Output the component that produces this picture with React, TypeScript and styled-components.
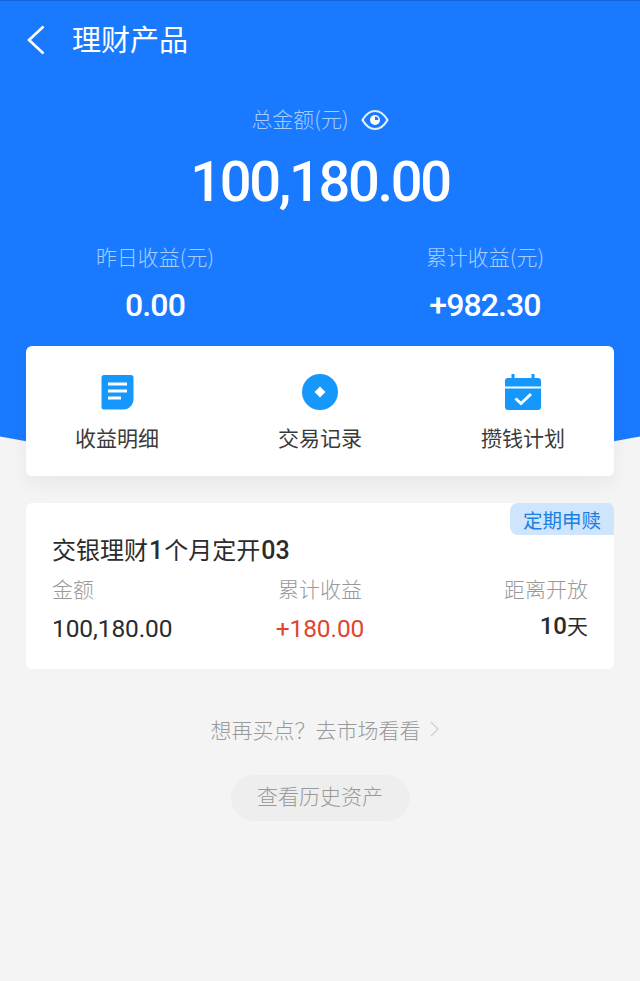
import styled, { createGlobalStyle } from "styled-components";

const cjk = '"Noto Sans CJK SC", "Noto Sans", sans-serif';
const num = 'Roboto, "Noto Sans CJK SC", sans-serif';

const GlobalStyle = createGlobalStyle`
  html, body {
    margin: 0;
    padding: 0;
    background: #f4f4f4;
  }
  * {
    box-sizing: border-box;
  }
`;

const Page = styled.div`
  width: 640px;
  height: 981px;
  overflow: hidden;
  background: #f4f4f4;
  font-family: ${cjk};
`;

const Hero = styled.section`
  height: 470px;
  padding-top: 2px;
  background: #1a7aff;
  border-top: 1px solid #1265d6;
  clip-path: circle(1700px at 50% -1233px);
  color: #fff;
`;

const Header = styled.header`
  height: 74px;
  display: flex;
  align-items: center;
  gap: 27px;
  padding-left: 26px;
`;

const Title = styled.h1`
  margin: -4px 0 0;
  font-size: 29px;
  font-weight: 400;
  line-height: 40px;
`;

const TotalLabel = styled.div`
  margin-top: 24px;
  height: 34px;
  display: flex;
  justify-content: center;
  align-items: center;
  gap: 11px;

  svg {
    margin: 3px 0 0 1px;
  }
`;

const MutedText = styled.span`
  font-size: 21px;
  font-weight: 300;
  line-height: 30px;
  color: #a6cdff;
`;

const TotalValue = styled.div`
  margin-top: 14px;
  text-align: center;
  font-family: ${num};
  font-size: 56px;
  font-weight: 500;
  line-height: 66px;
  letter-spacing: -2.3px;
`;

const Stats = styled.div`
  margin-top: 26px;
  display: grid;
  grid-template-columns: 310px 310px;
  gap: 20px;
`;

const Stat = styled.div`
  display: flex;
  flex-direction: column;
  align-items: center;
  gap: 16px;
`;

const StatValue = styled.div`
  font-family: ${num};
  font-size: 32px;
  font-weight: 500;
  line-height: 36px;
  letter-spacing: -0.9px;
`;

const ActionCard = styled.nav`
  position: relative;
  height: 130px;
  margin: -124px 26px 0;
  padding: 28px 49px 0;
  display: flex;
  justify-content: space-between;
  background: #fff;
  border-radius: 6px;
  box-shadow: 0 8px 18px rgba(0, 0, 0, 0.05);
`;

const Action = styled.div`
  width: 84px;
  display: flex;
  flex-direction: column;
  align-items: center;
  gap: 14px;
`;

const ActionLabel = styled.span`
  font-size: 21px;
  line-height: 26px;
  color: #3a3a3a;
  white-space: nowrap;
`;

const ProductCard = styled.article`
  position: relative;
  height: 166px;
  margin: 27px 26px 0;
  padding: 29px 26px 0;
  background: #fff;
  border-radius: 6px;
`;

const Tag = styled.span`
  position: absolute;
  top: 0;
  right: 0;
  width: 104px;
  height: 32px;
  display: flex;
  align-items: center;
  justify-content: center;
  font-size: 19.5px;
  color: #1a7fe0;
  background: #cfe4fd;
  border-radius: 8px 6px 0 8px;
`;

const ProductName = styled.h2`
  margin: 0;
  font-size: 24px;
  font-weight: 400;
  line-height: 34px;
  color: #2b2b2b;
  white-space: nowrap;

  b {
    font-family: ${num};
    font-size: 25px;
    font-weight: 500;
    margin: 0 1px;
  }
`;

const Columns = styled.div`
  margin-top: 5px;
  display: grid;
  grid-template-columns: 1fr 1fr 1fr;
`;

const Column = styled.div<{ $align: string }>`
  display: flex;
  flex-direction: column;
  align-items: ${(p) => p.$align};
  gap: 10px;
`;

const ColumnLabel = styled.span`
  font-size: 21px;
  font-weight: 300;
  line-height: 30px;
  color: #999;
`;

const ColumnValue = styled.span<{ $color?: string }>`
  font-family: ${num};
  font-size: 24.5px;
  font-weight: 400;
  line-height: 32px;
  letter-spacing: -0.1px;
  color: ${(p) => p.$color ?? "#2b2b2b"};
`;

const CountdownValue = styled.span`
  margin-top: -4px;
  font-family: ${num};
  font-size: 24px;
  font-weight: 500;
  line-height: 32px;
  color: #2b2b2b;

  small {
    font-family: ${cjk};
    font-size: 21px;
    font-weight: 400;
  }
`;

const MarketLink = styled.div`
  margin-top: 44px;
  padding-left: 9px;
  display: flex;
  justify-content: center;
  align-items: center;
  gap: 9px;
  font-size: 21px;
  font-weight: 300;
  line-height: 32px;
  color: #999;
`;

const HistoryButton = styled.button`
  display: block;
  width: 179px;
  height: 46px;
  margin: 30px auto 0;
  padding: 0 0 6px;
  border: 0;
  border-radius: 23px;
  background: #eeeeee;
  font-family: ${cjk};
  font-size: 21px;
  font-weight: 300;
  color: #999;
`;

const BackIcon = () => (
  <svg width="19" height="30" viewBox="0 0 19 30" fill="none">
    <path d="M17.5 1.5 3 15l14.500 13.500" stroke="#fff" strokeWidth="2.6" />
  </svg>
);

const EyeIcon = () => (
  <svg width="28" height="24" viewBox="0 0 28 24" fill="none">
    <path d="M1.500 12C5 6 9 3 14 3s9 3 12.500 9C23 18 19 21 14 21S5 18 1.500 12Z" stroke="#e2efff" strokeWidth="2.2" strokeLinejoin="round" />
    <circle cx="14" cy="12" r="5" fill="#fff" />
    <path d="M14 12V8.600a3.400 3.400 0 0 1 3.400 3.400Z" fill="#1a7aff" />
  </svg>
);

const DocIcon = () => (
  <svg width="33" height="36" viewBox="0 0 33 36">
    <path d="M3 1h27a2.500 2.500 0 0 1 2.500 2.500V25c0 6-4.500 10.500-10 10.500H3A2.500 2.500 0 0 1 .5 33V3.500A2.500 2.500 0 0 1 3 1Z" fill="#1597fb" />
    <path d="M7 8.500h19v3H7ZM7 15.500h19v3H7ZM7 22.500h13v3H7Z" fill="#fff" />
  </svg>
);

const CoinIcon = () => (
  <svg width="36" height="36" viewBox="0 0 36 36">
    <circle cx="18" cy="18" r="18" fill="#1597fb" />
    <path d="M18 12.500 23.500 18 18 23.500 12.500 18Z" fill="#fff" />
  </svg>
);

const CalendarIcon = () => (
  <svg width="36" height="36" viewBox="0 0 36 36">
    <path d="M6.500 0h3v4h17V0h3v4H33a3 3 0 0 1 3 3v5.500H0V7a3 3 0 0 1 3-3h3.500Z" fill="#1597fb" />
    <path d="M0 14.500h36V33a3 3 0 0 1-3 3H3a3 3 0 0 1-3-3Z" fill="#1597fb" />
    <path d="m10.500 24.500 5.500 5 10-9.500" fill="none" stroke="#fff" strokeWidth="3" />
  </svg>
);

const ChevronIcon = () => (
  <svg width="9" height="16" viewBox="0 0 9 16" fill="none">
    <path d="m1 1 7 7-7 7" stroke="#cfcfcf" strokeWidth="1.3" />
  </svg>
);

const App = () => {
  return (
    <Page>
      <GlobalStyle />
      <Hero>
        <Header>
          <BackIcon />
          <Title>理财产品</Title>
        </Header>
        <TotalLabel>
          <MutedText>总金额(元)</MutedText>
          <EyeIcon />
        </TotalLabel>
        <TotalValue>100,180.00</TotalValue>
        <Stats>
          <Stat>
            <MutedText>昨日收益(元)</MutedText>
            <StatValue>0.00</StatValue>
          </Stat>
          <Stat>
            <MutedText>累计收益(元)</MutedText>
            <StatValue>+982.30</StatValue>
          </Stat>
        </Stats>
      </Hero>
      <ActionCard>
        <Action>
          <DocIcon />
          <ActionLabel>收益明细</ActionLabel>
        </Action>
        <Action>
          <CoinIcon />
          <ActionLabel>交易记录</ActionLabel>
        </Action>
        <Action>
          <CalendarIcon />
          <ActionLabel>攒钱计划</ActionLabel>
        </Action>
      </ActionCard>
      <ProductCard>
        <Tag>定期申赎</Tag>
        <ProductName>
          交银理财<b>1</b>个月定开<b>03</b>
        </ProductName>
        <Columns>
          <Column $align="flex-start">
            <ColumnLabel>金额</ColumnLabel>
            <ColumnValue>100,180.00</ColumnValue>
          </Column>
          <Column $align="center">
            <ColumnLabel>累计收益</ColumnLabel>
            <ColumnValue $color="#e0452f">+180.00</ColumnValue>
          </Column>
          <Column $align="flex-end">
            <ColumnLabel>距离开放</ColumnLabel>
            <CountdownValue>
              10<small>天</small>
            </CountdownValue>
          </Column>
        </Columns>
      </ProductCard>
      <MarketLink>
        想再买点？去市场看看
        <ChevronIcon />
      </MarketLink>
      <HistoryButton>查看历史资产</HistoryButton>
    </Page>
  );
};

export default App;
